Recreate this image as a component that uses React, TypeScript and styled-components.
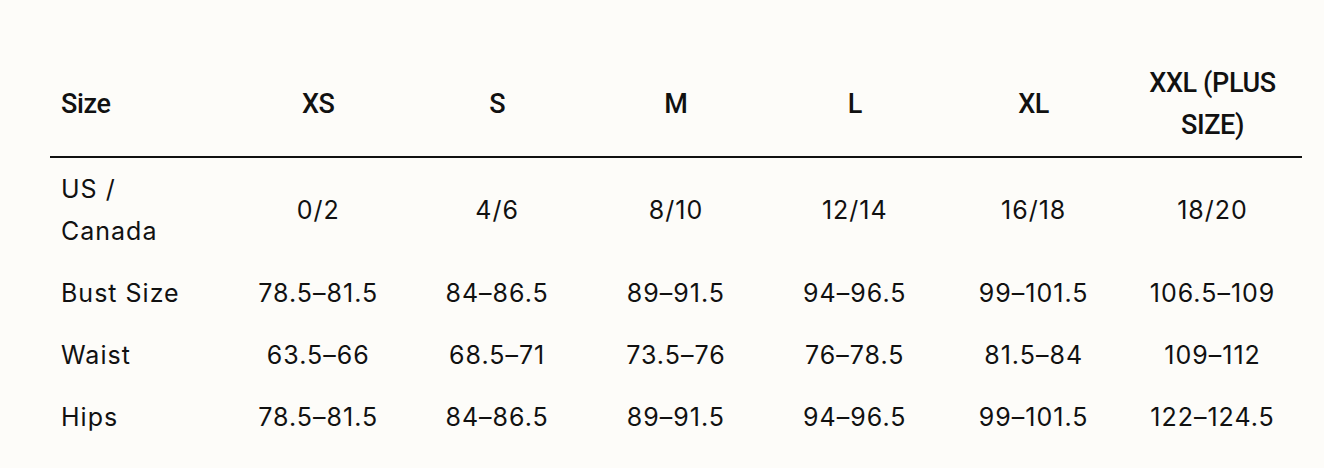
import React from "react";
import styled, { createGlobalStyle } from "styled-components";

const GlobalStyle = createGlobalStyle`
  html, body {
    margin: 0;
    padding: 0;
    background: #fdfcf9;
  }
`;

const Page = styled.div`
  padding: 52px 22px 20px 50px;
`;

const Table = styled.table`
  width: 1252px;
  table-layout: fixed;
  border-collapse: collapse;
  color: #111;
`;

const HeadCell = styled.th<{ $first?: boolean }>`
  font-family: Roboto, "Liberation Sans", sans-serif;
  font-weight: 500;
  font-size: 27px;
  letter-spacing: -0.4px;
  line-height: 42px;
  padding: 10px 11px;
  text-align: ${(p) => (p.$first ? "left" : "center")};
  border-bottom: 2px solid #111;
  vertical-align: middle;
`;

const Cell = styled.td<{ $first?: boolean }>`
  font-family: Inter, "Liberation Sans", sans-serif;
  font-weight: 400;
  font-size: 25px;
  letter-spacing: 1px;
  line-height: 42px;
  padding: ${(p) => (p.$first ? "10px 40px 10px 11px" : "10px 11px")};
  text-align: ${(p) => (p.$first ? "left" : "center")};
  vertical-align: middle;
`;

const headers = ["XS", "S", "M", "L", "XL", "XXL (PLUS SIZE)"];

const rows: { label: string; values: string[] }[] = [
  { label: "US / Canada", values: ["0/2", "4/6", "8/10", "12/14", "16/18", "18/20"] },
  { label: "Bust Size", values: ["78.5–81.5", "84–86.5", "89–91.5", "94–96.5", "99–101.5", "106.5–109"] },
  { label: "Waist", values: ["63.5–66", "68.5–71", "73.5–76", "76–78.5", "81.5–84", "109–112"] },
  { label: "Hips", values: ["78.5–81.5", "84–86.5", "89–91.5", "94–96.5", "99–101.5", "122–124.5"] },
];

export default function App() {
  return (
    <Page>
      <GlobalStyle />
      <Table>
        <thead>
          <tr>
            <HeadCell $first>Size</HeadCell>
            {headers.map((h) => (
              <HeadCell key={h}>{h}</HeadCell>
            ))}
          </tr>
        </thead>
        <tbody>
          {rows.map((r) => (
            <tr key={r.label}>
              <Cell $first>{r.label}</Cell>
              {r.values.map((v, i) => (
                <Cell key={i}>{v}</Cell>
              ))}
            </tr>
          ))}
        </tbody>
      </Table>
    </Page>
  );
}
